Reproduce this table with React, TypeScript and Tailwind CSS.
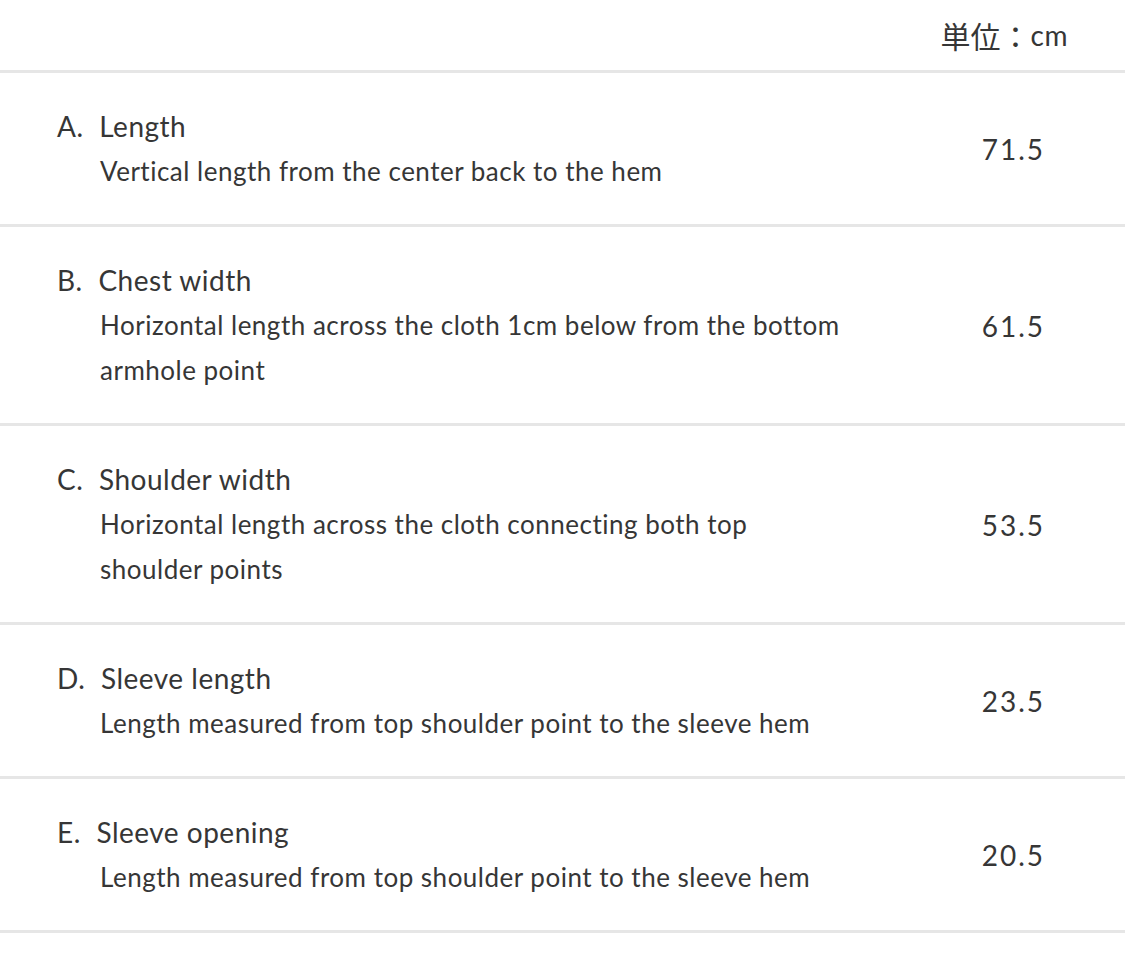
import React from 'react';

const rows = [
  { key: 'A.', label: 'Length', desc: 'Vertical length from the center back to the hem', value: '71.5' },
  { key: 'B.', label: 'Chest width', desc: 'Horizontal length across the cloth 1cm below from the bottom armhole point', value: '61.5' },
  { key: 'C.', label: 'Shoulder width', desc: 'Horizontal length across the cloth connecting both top shoulder points', value: '53.5' },
  { key: 'D.', label: 'Sleeve length', desc: 'Length measured from top shoulder point to the sleeve hem', value: '23.5' },
  { key: 'E.', label: 'Sleeve opening', desc: 'Length measured from top shoulder point to the sleeve hem', value: '20.5' },
];

export default function App() {
  return (
    <div className="w-[1125px] min-h-[955px] bg-white text-[#363636] font-['Lato','Noto_Sans_CJK_JP',sans-serif] tracking-[0.5px]">
      {/* Unit header */}
      <div className="h-[70px] flex items-center justify-end pr-[57px] text-[28px]">
        <span className="font-['Noto_Sans_CJK_JP',sans-serif] text-[30px] tracking-normal">単位：</span>
        <span>cm</span>
      </div>

      {rows.map((r) => (
        <div key={r.key} className="border-t-[3px] border-[#e6e6e6] flex items-center pt-[31px] pb-[30px] pl-[57px] pr-[80px]">
          <div className="flex-1">
            <div className="text-[28px] leading-[45px]">
              {r.key} <span className="ml-[8px]">{r.label}</span>
            </div>
            <div className="pl-[43px] text-[26px] leading-[45px] max-w-[795px]">{r.desc}</div>
          </div>
          <div className="text-[28px] tracking-[2px] w-[100px] text-right">{r.value}</div>
        </div>
      ))}
      <div className="border-t-[3px] border-[#e6e6e6]" />
    </div>
  );
}
